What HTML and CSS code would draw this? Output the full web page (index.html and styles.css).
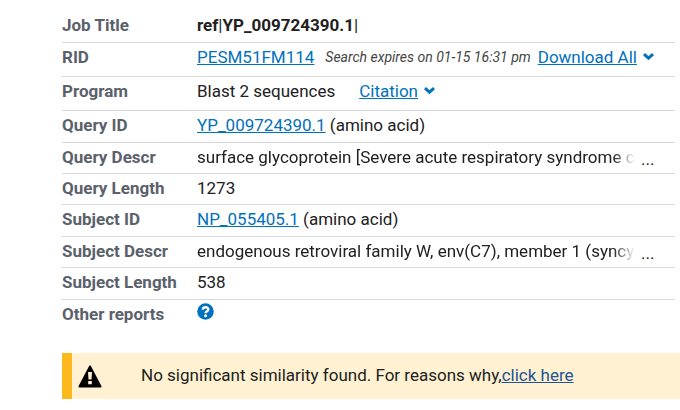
FILE: index.html
```
<!DOCTYPE html>
<html lang="en">
<head>
  <meta charset="UTF-8" />
  <meta name="viewport" content="width=device-width, initial-scale=1.0" />
  <title>BLAST results</title>
  <link rel="stylesheet" href="styles.css">
</head>
<body>
  <main>
    <dl class="summary">
      <div class="row">
        <dt>Job Title</dt>
        <dd><strong>ref</strong>|<strong>YP_009724390.1</strong>|</dd>
      </div>
      <div class="row tall">
        <dt>RID</dt>
        <dd>
          <a href="#">PESM51FM114</a>
          <em class="expires">Search expires on 01-15 16:31 pm</em>
          <a href="#">Download All</a>
          <svg class="chevron" viewBox="0 0 11 7"><path d="M1 1.2 L5.5 5.2 L10 1.2" /></svg>
        </dd>
      </div>
      <div class="row tall">
        <dt>Program</dt>
        <dd>
          <span class="program">Blast 2 sequences</span>
          <a href="#">Citation</a>
          <svg class="chevron" viewBox="0 0 11 7"><path d="M1 1.2 L5.5 5.2 L10 1.2" /></svg>
        </dd>
      </div>
      <div class="row">
        <dt>Query ID</dt>
        <dd><a href="#">YP_009724390.1</a>&nbsp;(amino acid)</dd>
      </div>
      <div class="row short">
        <dt>Query Descr</dt>
        <dd><span class="descr">surface glycoprotein [Severe acute respiratory syndrome c</span><span class="more">...</span></dd>
      </div>
      <div class="row short">
        <dt>Query Length</dt>
        <dd>1273</dd>
      </div>
      <div class="row">
        <dt>Subject ID</dt>
        <dd><a href="#">NP_055405.1</a>&nbsp;(amino acid)</dd>
      </div>
      <div class="row short">
        <dt>Subject Descr</dt>
        <dd><span class="descr">endogenous retroviral family W, env(C7), member 1 (syncy</span><span class="more">...</span></dd>
      </div>
      <div class="row">
        <dt>Subject Length</dt>
        <dd>538</dd>
      </div>
      <div class="row last">
        <dt>Other reports</dt>
        <dd>
          <a class="help" href="#" aria-label="Help">
            <svg viewBox="0 0 17 17">
              <circle cx="8.5" cy="8.5" r="8.3" fill="#0071bc" />
              <path d="M5.7 6.6 C6.1 3.4 11.4 3.6 11.3 6.5 C11.2 8.5 8.7 8.2 8.6 10.3" fill="none" stroke="#fff" stroke-width="2.4" />
              <circle cx="8.6" cy="12.8" r="1.5" fill="#fff" />
            </svg>
          </a>
        </dd>
      </div>
    </dl>
    <div class="warning">
      <svg class="warning-icon" viewBox="0 0 24 23">
        <path d="M12 1.5 L22.5 21.5 H1.5 Z" fill="#000" stroke="#000" stroke-width="2" stroke-linejoin="round" />
        <path d="M10 7 H14 L13.5 14.5 H10.5 Z M10.2 16 H13.8 V19.2 H10.2 Z" fill="#fff1d2" />
      </svg>
      <p>No significant similarity found. For reasons why,<a href="#">click here</a></p>
    </div>
  </main>
</body>
</html>
```
FILE: styles.css
```
body {
  margin: 0;
  background: #fff;
  color: #212121;
  font-family: Roboto, Arial, sans-serif;
  font-size: 17px;
  line-height: 22px;
}
main {
  padding: 11px 0 0 62px;
}
a {
  color: #0071bc;
}
.summary {
  margin: 0 5px 0 0;
}
.row {
  display: flex;
  box-sizing: border-box;
  min-height: 32px;
  padding-top: 3px;
  border-bottom: 1px solid #d6d7d9;
}
.row.tall {
  min-height: 34px;
}
.row.short {
  min-height: 31px;
}
.row.last {
  border-bottom: none;
}
dt {
  flex: 0 0 135px;
  color: #5b616b;
  font-weight: bold;
}
dd {
  display: flex;
  flex: 1;
  align-items: flex-start;
  min-width: 0;
  margin: 0;
}
.expires {
  margin: 0 7px 0 11px;
  color: #444;
  font-size: 14px;
}
.program {
  margin-right: 24px;
}
.chevron {
  width: 11px;
  height: 7px;
  margin: 7px 0 0 6px;
  fill: none;
  stroke: #0071bc;
  stroke-width: 3;
}
.descr {
  flex: 0 1 438px;
  overflow: hidden;
  white-space: nowrap;
  -webkit-mask-image: linear-gradient(to right, #000 95%, transparent);
  mask-image: linear-gradient(to right, #000 95%, transparent);
}
.more {
  margin-left: 6px;
  padding-top: 2px;
}
.help svg {
  display: block;
  width: 17px;
  height: 17px;
}
.warning {
  display: flex;
  align-items: center;
  min-height: 46px;
  margin-top: 21px;
  border-left: 10px solid #fdb81e;
  background: #fff1d2;
}
.warning-icon {
  width: 24px;
  height: 23px;
  margin: 0 39px 0 6px;
}
.warning p {
  margin: 0;
  padding-bottom: 2px;
}
.warning a {
  color: #205493;
}
```
